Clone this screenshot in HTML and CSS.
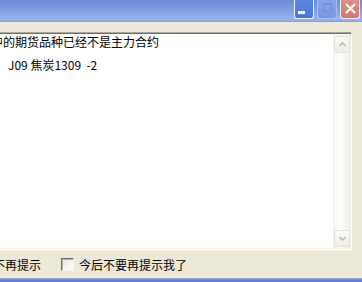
FILE: index.html
```html
<!DOCTYPE html>
<html lang="zh-CN">
<head>
  <meta charset="UTF-8">
  <title>提示</title>
  <link rel="stylesheet" href="styles.css">
</head>
<body>
  <div class="window">
    <div class="titlebar">
      <a class="btn min" href="javascript:;"><span></span></a>
      <a class="btn max" href="javascript:;"><span></span></a>
      <a class="btn close" href="javascript:;">
        <svg width="11" height="11" viewBox="0 0 11 11"><path d="M1.5 1.5 L9.5 9.5 M9.5 1.5 L1.5 9.5" stroke="#fff" stroke-width="2" stroke-linecap="round"/></svg>
      </a>
    </div>
    <div class="client">
      <div class="box">
        <div class="text">
          <p class="line">中的期货品种已经不是主力合约</p>
          <p class="line item">J09 焦炭1309&nbsp;&nbsp;-2</p>
        </div>
        <div class="scroll">
          <div class="arrow"><svg width="7" height="5" viewBox="0 0 7 5"><path d="M0.5 4 L3.5 1 L6.5 4" fill="none" stroke="#b9b9b2" stroke-width="1.6"/></svg></div>
          <div class="track"></div>
          <div class="arrow"><svg width="7" height="5" viewBox="0 0 7 5"><path d="M0.5 1 L3.5 4 L6.5 1" fill="none" stroke="#b9b9b2" stroke-width="1.6"/></svg></div>
        </div>
      </div>
      <div class="options">
        <span class="opt">不再提示</span>
        <label class="check"><span class="box-check"></span>今后不要再提示我了</label>
      </div>
    </div>
    <div class="frame-bottom"></div>
  </div>
</body>
</html>
```
FILE: styles.css
```css
*{
  margin: 0px;
  padding: 0px;
  box-sizing: border-box;
}
body{
  width: 362px;
  height: 282px;
  overflow: hidden;
  background-color: #ece9d8;
  font-family: "Noto Sans CJK SC", "Liberation Sans", sans-serif;
  font-size: 12px;
  color: #000000;
}
.window{
  display: flex;
  flex-direction: column;
  height: 282px;
}
.titlebar{
  height: 22px;
  display: flex;
  justify-content: flex-end;
  align-items: flex-start;
  gap: 3px;
  padding-right: 2px;
  background: linear-gradient(#6a8bd6, #86a5e8 60%, #98b3ee 90%, #7f98d8);
}
.btn{
  width: 20px;
  height: 19px;
  border: 1px solid #eef2fc;
  border-top: none;
  border-radius: 0 0 3px 3px;
  display: flex;
  align-items: center;
  justify-content: center;
}
.min{
  background: linear-gradient(#5d86e2, #4b74d6);
  align-items: flex-end;
  justify-content: flex-start;
  padding: 0 0 4px 3px;
}
.min span{
  width: 7px;
  height: 3px;
  background-color: #ffffff;
}
.max{
  background: linear-gradient(#86a4ea, #7a98e2);
  border-color: #a9bef0;
}
.max span{
  width: 9px;
  height: 9px;
  border: 1px solid #6f8fdc;
  border-top-width: 2px;
  margin-bottom: 4px;
}
.close{
  background: linear-gradient(#dc8f84, #cf7a70);
  padding-bottom: 2px;
}
.client{
  flex: 1;
  padding-top: 10px;
  display: flex;
  flex-direction: column;
}
.box{
  height: 218px;
  width: 365px;
  margin-left: -13px;
  display: flex;
  border: 1px solid;
  border-color: #aca899 #ffffff #ffffff #aca899;
  box-shadow: inset 1px 1px 0 #716f64, inset -1px -1px 0 #f1efe2;
  background-color: #ffffff;
  padding: 1px;
}
.text{
  flex: 1;
  padding: 1px 0 0 2px;
  white-space: nowrap;
  overflow: hidden;
}
.line{
  line-height: 14px;
  height: 14px;
}
.item{
  margin-top: 9px;
  padding-left: 17px;
}
.scroll{
  width: 17px;
  display: flex;
  flex-direction: column;
  background: linear-gradient(90deg, #f3f2ec, #fefefb 40%, #f4f3ee 80%, #eeede5);
}
.arrow{
  height: 17px;
  margin: 1px 0 1px 1px;
  border: 1px solid #e3e1d6;
  border-radius: 2px;
  background: linear-gradient(#fbfbf8, #edece6);
  display: flex;
  align-items: center;
  justify-content: center;
}
.scroll .arrow:first-child{
  margin-top: 2px;
}
.track{
  flex: 1;
}
.options{
  height: 28px;
  display: flex;
  align-items: center;
  margin-left: -7px;
}
.opt{
  width: 68px;
}
.check{
  display: flex;
  align-items: center;
  gap: 5px;
}
.box-check{
  width: 13px;
  height: 13px;
  border: 1px solid;
  border-color: #6b6b66 #f4f3ee #f4f3ee #6b6b66;
  box-shadow: inset 1px 1px 0 #b9b6a8;
  background: linear-gradient(135deg, #e6e4da, #ffffff);
}
.frame-bottom{
  height: 4px;
  background: linear-gradient(#a9b6e6, #6f86d8 40%, #5d74cc);
}
```
